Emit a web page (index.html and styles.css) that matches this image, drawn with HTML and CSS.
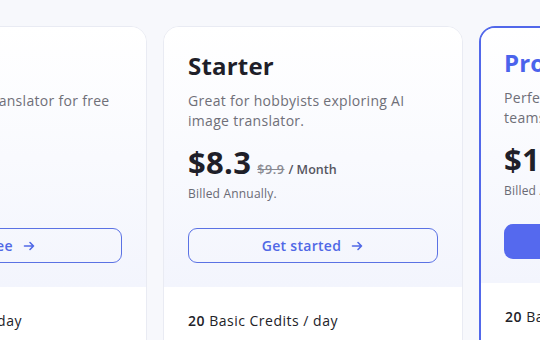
FILE: index.html
```html
<!DOCTYPE html>
<html>
<head>
<meta charset="utf-8">
<link rel="stylesheet" href="styles.css">
</head>
<body>
<div class="plans">
  <div class="card">
    <div class="top">
      <h2 class="title">Free</h2>
      <p class="desc">Try our AI image translator for free</p>
      <div class="price-row"><span class="price">$0</span></div>
      <div class="billed">&nbsp;</div>
      <a class="btn btn-outline">Try free <svg class="arrow" viewBox="0 0 14 14"><path d="M2.5 7h9M8 3.5 11.5 7 8 10.5"/></svg></a>
    </div>
    <div class="bottom">
      <div class="feature"><b>20</b> Basic Credits / day</div>
    </div>
  </div>
  <div class="card">
    <div class="top">
      <h2 class="title">Starter</h2>
      <p class="desc">Great for hobbyists exploring AI image translator.</p>
      <div class="price-row"><span class="price">$8.3</span><s class="old">$9.9</s><span class="per">/ Month</span></div>
      <div class="billed">Billed Annually.</div>
      <a class="btn btn-outline">Get started <svg class="arrow" viewBox="0 0 14 14"><path d="M2.5 7h9M8 3.5 11.5 7 8 10.5"/></svg></a>
    </div>
    <div class="bottom">
      <div class="feature"><b>20</b> Basic Credits / day</div>
    </div>
  </div>
  <div class="card card-pro">
    <div class="top">
      <h2 class="title">Pro</h2>
      <p class="desc">Perfect for professionals and small teams.</p>
      <div class="price-row"><span class="price">$16.6</span><s class="old">$19.9</s><span class="per">/ Month</span></div>
      <div class="billed">Billed Annually.</div>
      <a class="btn btn-fill">Get started <svg class="arrow" viewBox="0 0 14 14"><path d="M2.5 7h9M8 3.5 11.5 7 8 10.5"/></svg></a>
    </div>
    <div class="bottom">
      <div class="feature"><b>20</b> Basic Credits / day</div>
    </div>
  </div>
</div>
</body>
</html>
```
FILE: styles.css
```css
* { box-sizing: border-box; }
body {
  margin: 0;
  background: #f7f8fc;
  font-family: "Open Sans", "Noto Sans", sans-serif;
  color: #1f1f29;
  overflow: hidden;
}
.plans {
  display: flex;
  gap: 16px;
  padding-top: 26px;
  margin-left: -153px;
}
.card {
  flex: 0 0 300px;
  width: 300px;
  height: 340px;
  background: #fff;
  border: 1px solid #e9ebf3;
  border-radius: 16px;
  overflow: hidden;
}
.card-pro {
  border: 2px solid #5268ea;
}
.top {
  padding: 21px 24px 24px;
  background: linear-gradient(180deg, #ffffff 0%, #f3f5fd 100%);
  display: flex;
  flex-direction: column;
  height: 260px;
}
.card-pro .top { padding: 17px 23px 24px; height: 255px; }
.title {
  margin: 0;
  font-size: 24px;
  line-height: 36px;
  font-weight: 700;
  letter-spacing: 0.2px;
  color: #1f1f29;
}
.card-pro .title { color: #4b63ec; }
.desc {
  margin: 7px 0 0;
  font-size: 14px;
  line-height: 20px;
  letter-spacing: 0.3px;
  color: #6f6f78;
  height: 40px;
}
.price-row {
  margin-top: 11px;
  display: flex;
  align-items: baseline;
  gap: 4px;
  height: 40px;
}
.price {
  font-size: 31px;
  font-weight: 700;
  line-height: 40px;
  letter-spacing: 0.3px;
  color: #1f1f29;
}
.old {
  font-size: 12.5px;
  font-weight: 600;
  letter-spacing: 0.6px;
  color: #8a8a92;
  margin-left: 2px;
}
.per {
  font-size: 12.5px;
  font-weight: 600;
  color: #55555e;
}
.billed {
  margin-top: 3px;
  font-size: 12px;
  line-height: 18px;
  letter-spacing: 0.2px;
  color: #6a6a74;
}
.btn {
  margin-top: auto;
  height: 35px;
  border-radius: 9px;
  display: flex;
  align-items: center;
  justify-content: center;
  gap: 9px;
  font-size: 14px;
  font-weight: 600;
  letter-spacing: 0.3px;
}
.btn-outline {
  border: 1px solid #5b72e4;
  color: #5068e6;
}
.btn-fill {
  background: #5569ee;
  color: #fff;
}
.arrow {
  width: 14px;
  height: 14px;
  fill: none;
  stroke: currentColor;
  stroke-width: 1.6;
  stroke-linecap: round;
  stroke-linejoin: round;
}
.bottom {
  padding: 22px 24px;
}
.feature {
  font-size: 14px;
  line-height: 24px;
  letter-spacing: 0.5px;
  color: #222228;
}
.feature b { font-weight: 600; }
```
